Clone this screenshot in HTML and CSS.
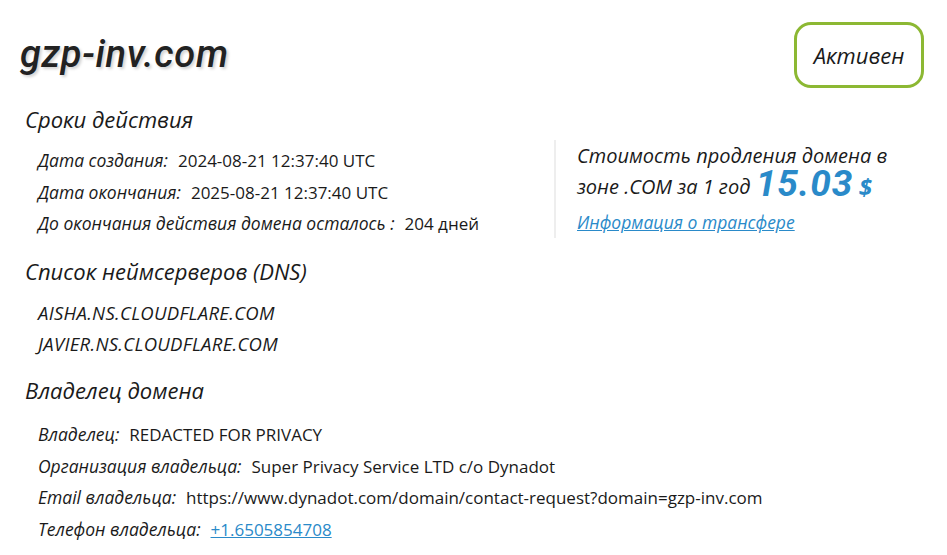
FILE: index.html
```html
<!DOCTYPE html>
<html lang="ru">
<head>
<meta charset="utf-8">
<title>gzp-inv.com</title>
<link rel="stylesheet" href="styles.css">
</head>
<body>
<div class="page">
  <header class="top">
    <h1 class="domain">gzp-inv.com</h1>
    <div class="status">Активен</div>
  </header>

  <section class="section">
    <h2 class="sec-title">Сроки действия</h2>
    <div class="terms">
      <div class="rows">
        <div class="row"><span class="lbl">Дата создания:</span><span class="val">2024-08-21 12:37:40 UTC</span></div>
        <div class="row"><span class="lbl">Дата окончания:</span><span class="val">2025-08-21 12:37:40 UTC</span></div>
        <div class="row"><span class="lbl">До окончания действия домена осталось :</span><span class="val">204 дней</span></div>
      </div>
      <div class="price">
        <div class="price-line">Стоимость продления домена в</div>
        <div class="price-line">зоне .COM за 1 год <span class="amount">15.03</span> <span class="cur">$</span></div>
        <a class="transfer" href="#">Информация о трансфере</a>
      </div>
    </div>
  </section>

  <section class="section">
    <h2 class="sec-title">Список неймсерверов (DNS)</h2>
    <div class="rows">
      <div class="row ns">AISHA.NS.CLOUDFLARE.COM</div>
      <div class="row ns">JAVIER.NS.CLOUDFLARE.COM</div>
    </div>
  </section>

  <section class="section">
    <h2 class="sec-title">Владелец домена</h2>
    <div class="rows">
      <div class="row"><span class="lbl">Владелец:</span><span class="val">REDACTED FOR PRIVACY</span></div>
      <div class="row"><span class="lbl">Организация владельца:</span><span class="val">Super Privacy Service LTD c/o Dynadot</span></div>
      <div class="row"><span class="lbl">Email владельца:</span><span class="val">https://www.dynadot.com/domain/contact-request?domain=gzp-inv.com</span></div>
      <div class="row"><span class="lbl">Телефон владельца:</span><a class="val link" href="#">+1.6505854708</a></div>
    </div>
  </section>
</div>
</body>
</html>
```

FILE: styles.css
```css
* { box-sizing: border-box; }
html, body { margin: 0; padding: 0; background: #fff; }
body {
  font-family: "Open Sans", "Noto Sans", "Liberation Sans", sans-serif;
  color: #1a1a1a;
}
.page {
  padding: 22px 23px 0 20px;
}
.top {
  display: flex;
  justify-content: space-between;
  align-items: flex-start;
}
.domain {
  margin: 10px 0 0 0;
  font-family: Roboto, "Open Sans", sans-serif;
  font-size: 38px;
  font-weight: 500;
  font-style: italic;
  line-height: 44px;
  letter-spacing: 0.7px;
  color: #222;
  text-shadow: 2px 2px 3px rgba(0,0,0,0.18);
}
.status {
  width: 130px;
  height: 66px;
  border: 3px solid #8cb833;
  border-radius: 17px;
  display: flex;
  align-items: center;
  justify-content: center;
  font-size: 22px;
  font-style: italic;
  color: #1a1a1a;
}
.section {
  padding-left: 5px;
}
.sec-title {
  margin: 0;
  font-size: 22px;
  font-weight: 400;
  font-style: italic;
  line-height: 30px;
  color: #1a1a1a;
}
.section:nth-of-type(1) .sec-title { margin-top: 16px; }
.section:nth-of-type(2) .sec-title { margin-top: 16px; }
.section:nth-of-type(3) .sec-title { margin-top: 15.5px; }
.terms {
  display: flex;
  align-items: flex-start;
  margin-top: 11px;
}
.rows {
  padding-left: 13px;
  display: flex;
  flex-direction: column;
}
.terms .rows { width: 529px; flex: none; }
.row {
  font-size: 17px;
  line-height: 31.5px;
  white-space: nowrap;
}
.lbl {
  font-style: italic;
  font-size: 17.5px;
  margin-right: 10px;
}
.ns { font-style: italic; font-size: 18.5px; letter-spacing: 0.3px; line-height: 31px; }
.section:nth-of-type(2) .rows { margin-top: 11.5px; }
.section:nth-of-type(3) .rows { margin-top: 14.5px; }
.section:nth-of-type(3) .row { line-height: 30.7px; }
.val { color: #1a1a1a; }
.link, .transfer { color: #2a8ac9; text-decoration: underline; }
.price {
  border-left: 2px solid #eeeeee;
  padding-left: 21px;
  padding-bottom: 3px;
  margin-top: -5px;
}
.price-line {
  font-size: 20px;
  font-style: italic;
  line-height: 31px;
  white-space: nowrap;
}
.amount {
  font-family: Roboto, "Open Sans", sans-serif;
  font-size: 37px;
  font-weight: 700;
  font-style: italic;
  color: #2a8ac9;
  letter-spacing: 1px;
  line-height: 20px;
  vertical-align: -2px;
}
.cur {
  font-size: 24px;
  font-weight: 700;
  font-style: italic;
  color: #2a8ac9;
  line-height: 20px;
  vertical-align: -2px;
}
.transfer {
  display: block;
  font-size: 17.5px;
  font-style: italic;
  line-height: 26px;
  margin-top: 7px;
}
```
